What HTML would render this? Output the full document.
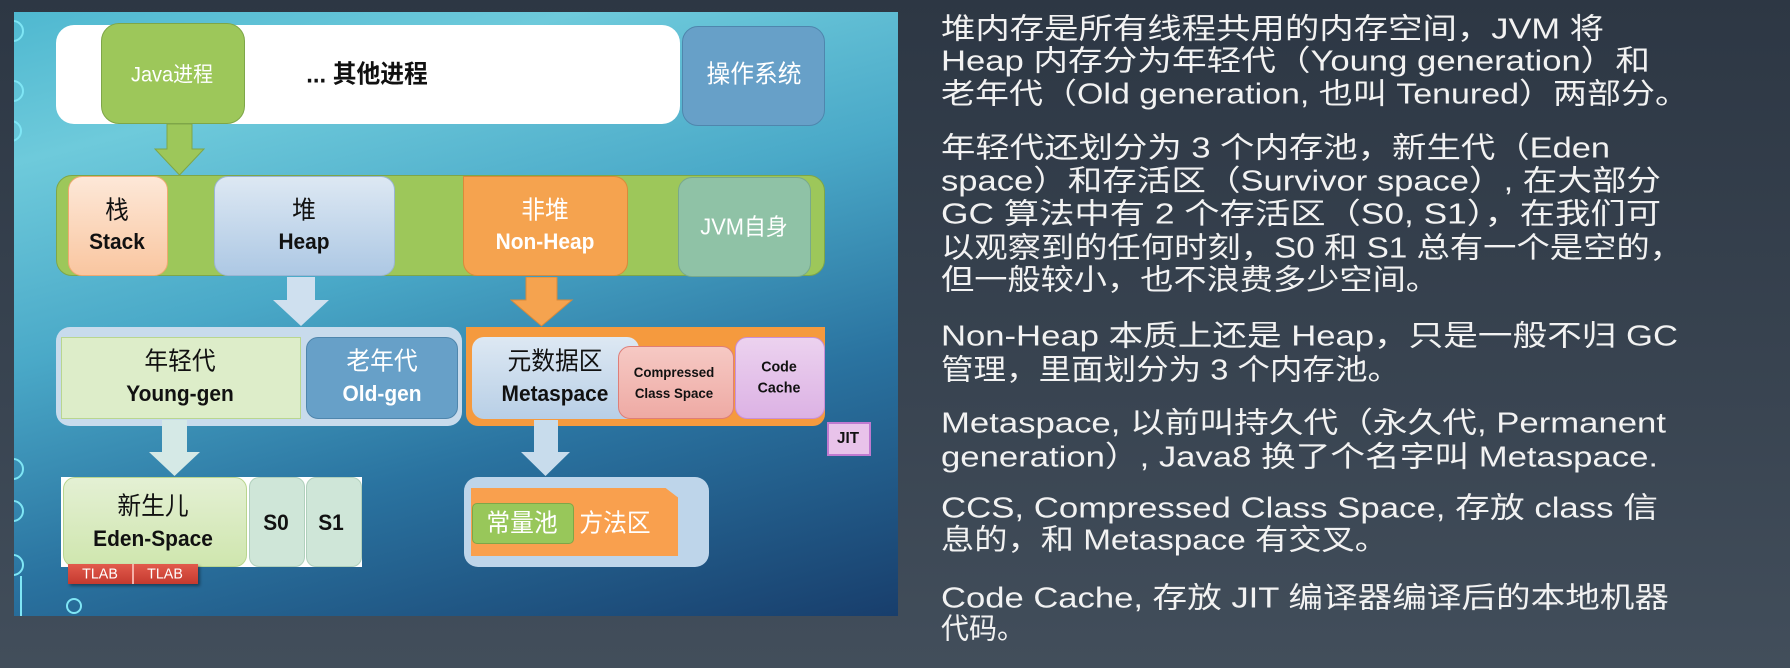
<!DOCTYPE html>
<html><head><meta charset="utf-8"><style>
html,body{margin:0;padding:0}
body{width:1790px;height:668px;position:relative;overflow:hidden;background:linear-gradient(180deg,#2d3744 0%,#37424f 50%,#424e5b 100%);font-family:"Liberation Sans","Noto Sans CJK SC",sans-serif}
.a{position:absolute;box-sizing:border-box}
.t{position:absolute;transform:translate(-50%,-50%) scaleX(0.95);white-space:nowrap;font-size:22px;line-height:1;font-weight:bold}
.c{font-size:25px;font-weight:normal}
.w{color:#fff}.k{color:#111}
.ln{position:absolute;left:941px;color:#f2f2f2;font-size:29px;white-space:nowrap;transform-origin:0 50%;transform:translateY(-50%);line-height:1}
</style></head><body>
<div class="a" style="left:14px;top:12px;width:884px;height:604px;background:linear-gradient(165deg,#4fb8d0 0%,#6ecadb 18%,#4aa9c8 42%,#2a73a0 68%,#183e6c 100%);overflow:hidden">
 <div class="a" style="left:-12px;top:8px;width:22px;height:22px;border:2px solid #7fe6f5;border-radius:50%"></div>
 <div class="a" style="left:-12px;top:68px;width:22px;height:22px;border:2px solid #7fe6f5;border-radius:50%"></div>
 <div class="a" style="left:-14px;top:108px;width:22px;height:22px;border:2px solid #7fe6f5;border-radius:50%"></div>
 <div class="a" style="left:-12px;top:446px;width:22px;height:22px;border:2px solid #7fe6f5;border-radius:50%"></div>
 <div class="a" style="left:-12px;top:488px;width:22px;height:22px;border:2px solid #7fe6f5;border-radius:50%"></div>
 <div class="a" style="left:-12px;top:542px;width:22px;height:22px;border:2px solid #7fe6f5;border-radius:50%"></div>
 <div class="a" style="left:6px;top:564px;width:2px;height:40px;background:#7fe6f5"></div>
 <div class="a" style="left:52px;top:586px;width:16px;height:16px;border:2px solid #7fe6f5;border-radius:50%"></div>
</div>
<div class="a" style="left:56px;top:25px;width:624px;height:99px;background:#fff;border-radius:18px"></div>
<div class="a" style="left:101px;top:23px;width:144px;height:101px;background:#9dc75a;border:1px solid #7ea648;border-radius:18px"></div>
<div class="t w" style="left:172px;top:75px;font-size:21px;font-weight:normal">Java进程</div>
<div class="t k c" style="left:367px;top:75px;font-weight:bold">... 其他进程</div>
<div class="a" style="left:682px;top:26px;width:143px;height:100px;background:#67a0c8;border:1px solid #4f86ad;border-radius:16px"></div>
<div class="t w c" style="left:754px;top:75px">操作系统</div>
<svg class="a" style="left:150px;top:123px" width="60" height="54"><polygon points="17,1 42,1 42,26 54,26 29.5,52 5,26 17,26" fill="#9dc75a" stroke="#7ea648"/></svg>
<div class="a" style="left:56px;top:175px;width:769px;height:101px;background:#9dc75a;border:1px solid #7ea648;border-radius:16px"></div>
<div class="a" style="left:68px;top:176px;width:100px;height:100px;background:linear-gradient(#fde8d8,#f9c6a0);border:1px solid #f0a870;border-radius:14px"></div>
<div class="t k c" style="left:117px;top:211px">栈</div><div class="t k" style="left:117px;top:242px">Stack</div>
<div class="a" style="left:214px;top:176px;width:181px;height:100px;background:linear-gradient(#dde8f3,#adc8e4);border:1px solid #9ab5d3;border-radius:14px"></div>
<div class="t k c" style="left:304px;top:211px">堆</div><div class="t k" style="left:304px;top:242px">Heap</div>
<div class="a" style="left:463px;top:176px;width:165px;height:100px;background:#f5a34f;border:1px solid #d98a3a;border-radius:0 14px 14px 14px"></div>
<div class="t w c" style="left:545px;top:211px">非堆</div><div class="t w" style="left:545px;top:242px">Non-Heap</div>
<div class="a" style="left:678px;top:177px;width:133px;height:100px;background:#8fc2a6;border:1px solid #78a98d;border-radius:14px"></div>
<div class="t w" style="left:744px;top:227px;font-size:23px;font-weight:normal">JVM自身</div>
<svg class="a" style="left:272px;top:277px" width="60" height="52"><polygon points="15,0 43,0 43,23 57,23 29,49 1,23 15,23" fill="#cfe0ef"/></svg>
<svg class="a" style="left:510px;top:277px" width="64" height="52"><polygon points="16,0 47,0 47,23 62,23 31.5,49 1,23 16,23" fill="#f5a34f" stroke="#d98a3a"/></svg>
<div class="a" style="left:56px;top:327px;width:406px;height:99px;background:#c8dbec;border-radius:14px"></div>
<div class="a" style="left:61px;top:337px;width:240px;height:82px;background:#ddedc9;border:1px solid #b9d68f"></div>
<div class="t k c" style="left:180px;top:362px">年轻代</div><div class="t k" style="left:180px;top:394px">Young-gen</div>
<div class="a" style="left:306px;top:337px;width:152px;height:82px;background:#67a0c8;border:1px solid #4f86ad;border-radius:12px"></div>
<div class="t w c" style="left:382px;top:362px">老年代</div><div class="t w" style="left:382px;top:394px">Old-gen</div>
<div class="a" style="left:466px;top:327px;width:359px;height:99px;background:#f59a3e;border-radius:0 0 12px 12px"></div>
<div class="a" style="left:472px;top:337px;width:167px;height:82px;background:linear-gradient(#dde8f3,#b8cfe6);border-radius:12px"></div>
<div class="t k c" style="left:555px;top:362px">元数据区</div><div class="t k" style="left:555px;top:394px">Metaspace</div>
<div class="a" style="left:618px;top:346px;width:116px;height:73px;background:linear-gradient(#f6c9c4,#eeaaa4);border:1px solid #de7e78;border-radius:12px"></div>
<div class="t k" style="left:674px;top:372px;font-size:14px">Compressed</div><div class="t k" style="left:674px;top:393px;font-size:14px">Class Space</div>
<div class="a" style="left:735px;top:337px;width:90px;height:82px;background:linear-gradient(#ecd2ef,#dcb2e4);border:1px solid #c98fd8;border-radius:12px"></div>
<div class="t k" style="left:779px;top:367px;font-size:15px">Code</div><div class="t k" style="left:779px;top:388px;font-size:15px">Cache</div>
<div class="a" style="left:827px;top:422px;width:44px;height:34px;background:#e8c3ea;border:2px solid #c07ad0"></div>
<div class="t k" style="left:848px;top:439px;font-size:16px">JIT</div>
<svg class="a" style="left:149px;top:420px" width="52" height="57"><polygon points="13,0 38,0 38,32 51,32 25.5,56 0,32 13,32" fill="#d5e9e6"/></svg>
<svg class="a" style="left:521px;top:420px" width="50" height="57"><polygon points="13,0 37,0 37,32 49,32 24.5,56 0,32 13,32" fill="#c8dcec"/></svg>
<div class="a" style="left:61px;top:477px;width:301px;height:90px;background:#fff"></div>
<div class="a" style="left:63px;top:477px;width:184px;height:90px;background:linear-gradient(#e4f0d4,#cfe6ae);border:1px solid #b9d68f;border-radius:12px"></div>
<div class="t k c" style="left:153px;top:507px">新生儿</div><div class="t k" style="left:153px;top:539px">Eden-Space</div>
<div class="a" style="left:249px;top:477px;width:56px;height:90px;background:#cfe6d8;border:1px solid #b0d0bc;border-radius:10px"></div>
<div class="t k" style="left:276px;top:523px">S0</div>
<div class="a" style="left:306px;top:477px;width:56px;height:90px;background:#cfe6d8;border:1px solid #b0d0bc;border-radius:10px"></div>
<div class="t k" style="left:331px;top:523px">S1</div>
<div class="a" style="left:68px;top:564px;width:130px;height:20px;background:linear-gradient(#e25a4c,#c43a2f);box-shadow:2px 2px 3px rgba(0,0,0,.4)"></div>
<div class="a" style="left:132px;top:564px;width:2px;height:20px;background:#f5b0a8"></div>
<div class="t w" style="left:100px;top:574px;font-size:15px;font-weight:normal">TLAB</div><div class="t w" style="left:165px;top:574px;font-size:15px;font-weight:normal">TLAB</div>
<div class="a" style="left:464px;top:477px;width:245px;height:90px;background:#bed5ea;border-radius:14px"></div>
<div class="a" style="left:471px;top:488px;width:207px;height:68px;background:#f9a04e;clip-path:polygon(0 0,94% 0,100% 14%,100% 100%,0 100%);box-shadow:0 2px 3px rgba(0,0,0,.3)"></div>
<div class="a" style="left:472px;top:503px;width:102px;height:41px;background:#98c75a;border:1px solid #7ea648;border-radius:5px"></div>
<div class="t w c" style="left:522px;top:524px">常量池</div>
<div class="t w c" style="left:615px;top:524px">方法区</div>

<div class="ln" data-w="663" style="top:30px">堆内存是所有线程共用的内存空间，JVM 将</div>
<div class="ln" data-w="709" style="top:62px">Heap 内存分为年轻代（Young generation）和</div>
<div class="ln" data-w="748" style="top:95px">老年代（Old generation, 也叫 Tenured）两部分。</div>
<div class="ln" data-w="669" style="top:149px">年轻代还划分为 3 个内存池，新生代（Eden</div>
<div class="ln" data-w="720" style="top:182px">space）和存活区（Survivor space）, 在大部分</div>
<div class="ln" data-w="720" style="top:215px">GC 算法中有 2 个存活区（S0, S1），在我们可</div>
<div class="ln" data-w="742" style="top:249px">以观察到的任何时刻，S0 和 S1 总有一个是空的，</div>
<div class="ln" data-w="498" style="top:281px">但一般较小，也不浪费多少空间。</div>
<div class="ln" data-w="737" style="top:337px">Non-Heap 本质上还是 Heap，只是一般不归 GC</div>
<div class="ln" data-w="459" style="top:371px">管理，里面划分为 3 个内存池。</div>
<div class="ln" data-w="725" style="top:424px">Metaspace, 以前叫持久代（永久代, Permanent</div>
<div class="ln" data-w="717" style="top:458px">generation）, Java8 换了个名字叫 Metaspace.</div>
<div class="ln" data-w="717" style="top:509px">CCS, Compressed Class Space, 存放 class 信</div>
<div class="ln" data-w="447" style="top:541px">息的，和 Metaspace 有交叉。</div>
<div class="ln" data-w="728" style="top:599px">Code Cache, 存放 JIT 编译器编译后的本地机器</div>
<div class="ln" data-w="84" style="top:630px">代码。</div>
<script>
document.querySelectorAll('.ln').forEach(function(e){
 var w=e.getBoundingClientRect().width, t=+e.getAttribute('data-w');
 var s=t/w; if(!(s>0.7&&s<1.5))s=1;
 e.style.transform='translateY(-50%) scaleX('+s+')';
});
</script>
</body></html>
